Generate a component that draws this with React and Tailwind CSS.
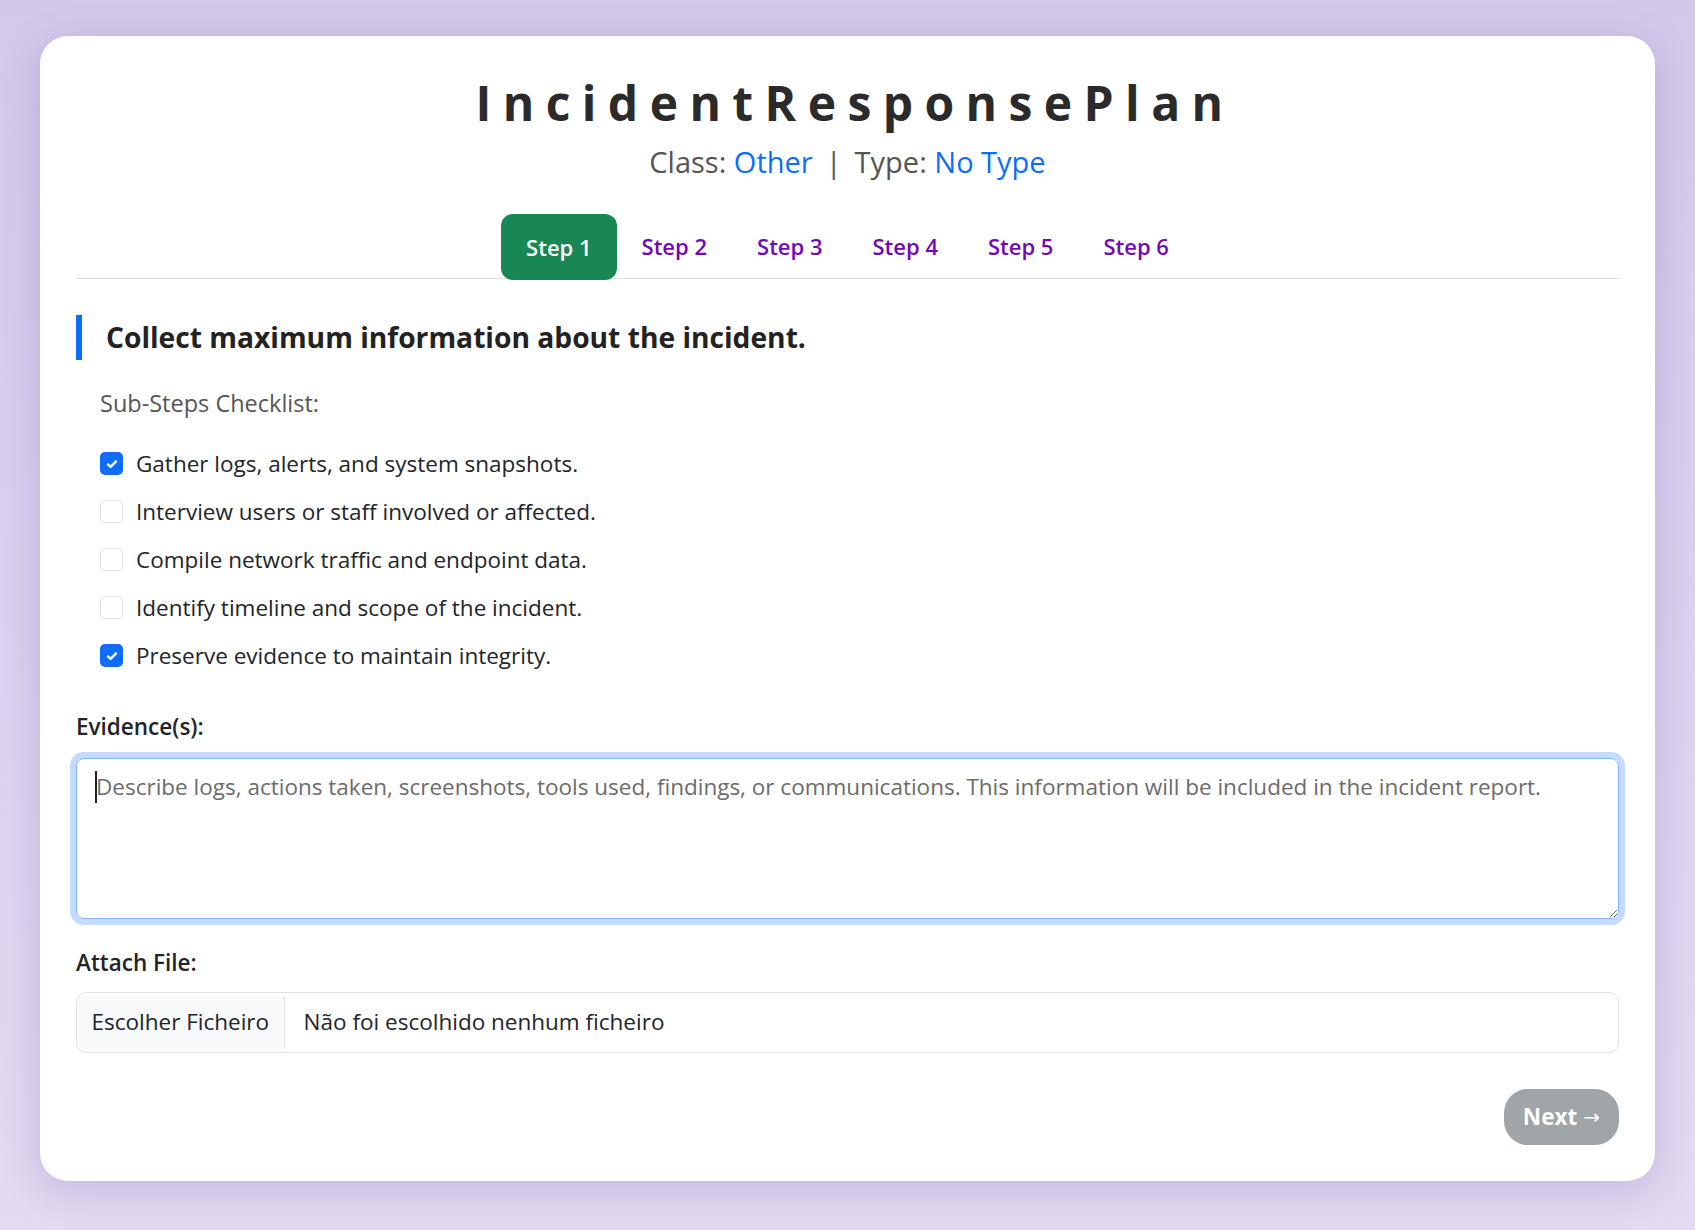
import React from "react";

function Check({ checked }) {
  if (checked) {
    return (
      <span className="flex h-[23px] w-[23px] shrink-0 items-center justify-center rounded-[5px] bg-[#0d6efd]">
        <svg viewBox="0 0 20 20" className="h-[16px] w-[16px]" fill="none">
          <path d="M5 10.5l3.2 3.2L15 6.8" stroke="#fff" strokeWidth="3" strokeLinecap="round" strokeLinejoin="round" />
        </svg>
      </span>
    );
  }
  return <span className="h-[23px] w-[23px] shrink-0 rounded-[5px] border border-[#dee2e6] bg-white" />;
}

const items = [
  ["Gather logs, alerts, and system snapshots.", true],
  ["Interview users or staff involved or affected.", false],
  ["Compile network traffic and endpoint data.", false],
  ["Identify timeline and scope of the incident.", false],
  ["Preserve evidence to maintain integrity.", true],
];

export default function App() {
  return (
    <div className="min-h-[1230px] bg-gradient-to-b from-[#d3c8ea] to-[#e2dbf2] px-[40px] pt-[36px] pb-[49px] font-['Open_Sans',sans-serif]">
      <div className="rounded-[28px] bg-white px-[36px] pt-[38px] pb-[36px] shadow-[0_10px_40px_rgba(90,60,150,0.22)]">
        <h1 className="pl-[15px] text-center text-[48px] font-bold leading-[1.2] tracking-[11.4px] text-[#2b2b2b]">
          IncidentResponsePlan
        </h1>
        <div className="mt-[8px] text-center text-[29px] leading-[1.5] text-[#555]">
          Class: <span className="text-[#0d6efd]">Other</span>
          <span className="mx-[13px]">|</span>
          Type: <span className="text-[#0d6efd]">No Type</span>
        </div>

        <div className="mt-[31px] flex justify-center border-b border-[#dee2e6]">
          <div className="flex">
            <div className="-mb-[2px] flex h-[66px] items-center rounded-[12px] bg-[#198754] px-[25px] text-[22px] font-semibold text-white">
              Step 1
            </div>
            {["Step 2", "Step 3", "Step 4", "Step 5", "Step 6"].map((s) => (
              <div key={s} className="flex h-[64px] items-center px-[25px] text-[22px] font-semibold text-[#7209b7]">
                {s}
              </div>
            ))}
          </div>
        </div>

        <h2 className="mt-[36px] border-l-[6px] border-[#0d6efd] pl-6 text-[28.2px] font-bold leading-[45px] text-[#222]">
          Collect maximum information about the incident.
        </h2>

        <div className="mt-[26px] pl-[24px] text-[23.5px] text-[#555]">Sub-Steps Checklist:</div>

        <div className="mt-[31px] flex flex-col gap-[25px] pl-[24px]">
          {items.map(([t, c]) => (
            <div key={t} className="flex items-center gap-[13px] text-[22.5px] leading-[23px] text-[#212529]">
              <Check checked={c} />
              <span>{t}</span>
            </div>
          ))}
        </div>

        <div className="mt-[43px] text-[22.5px] font-semibold text-[#212529]">Evidence(s):</div>
        <div className="relative mt-[14px]">
          <textarea
            rows={4}
            placeholder="Describe logs, actions taken, screenshots, tools used, findings, or communications. This information will be included in the incident report."
            className="block h-[161px] w-full resize-y rounded-[8px] border border-[#86b7fe] px-[19px] py-[11px] text-[22.5px] leading-[1.5] text-[#212529] shadow-[0_0_0_6px_#c2dbfe] outline-none placeholder:text-[#6c6c6c]"
          />
          <span className="absolute left-[19px] top-[13px] h-[32px] w-[2px] bg-[#222]" />
        </div>

        <div className="mt-[27px] text-[22.5px] font-semibold text-[#212529]">Attach File:</div>
        <div className="mt-[12px] flex h-[61px] items-stretch overflow-hidden rounded-[10px] border border-[#dee2e6] bg-white text-[22.5px] text-[#212529]">
          <div className="my-[3px] flex items-center border-r border-[#dee2e6] bg-[#f8f9fa] px-[14.5px]">
            Escolher Ficheiro
          </div>
          <div className="flex items-center pl-[19px]">Não foi escolhido nenhum ficheiro</div>
        </div>

        <div className="mt-[36px] flex justify-end">
          <button className="flex h-[56px] items-center gap-[6px] rounded-[24px] bg-[#a0a5aa] px-[19px] text-[22.5px] font-bold text-white">
            Next
            <span className="font-['DejaVu_Sans',sans-serif] text-[20px] font-normal">→</span>
          </button>
        </div>
      </div>
    </div>
  );
}
